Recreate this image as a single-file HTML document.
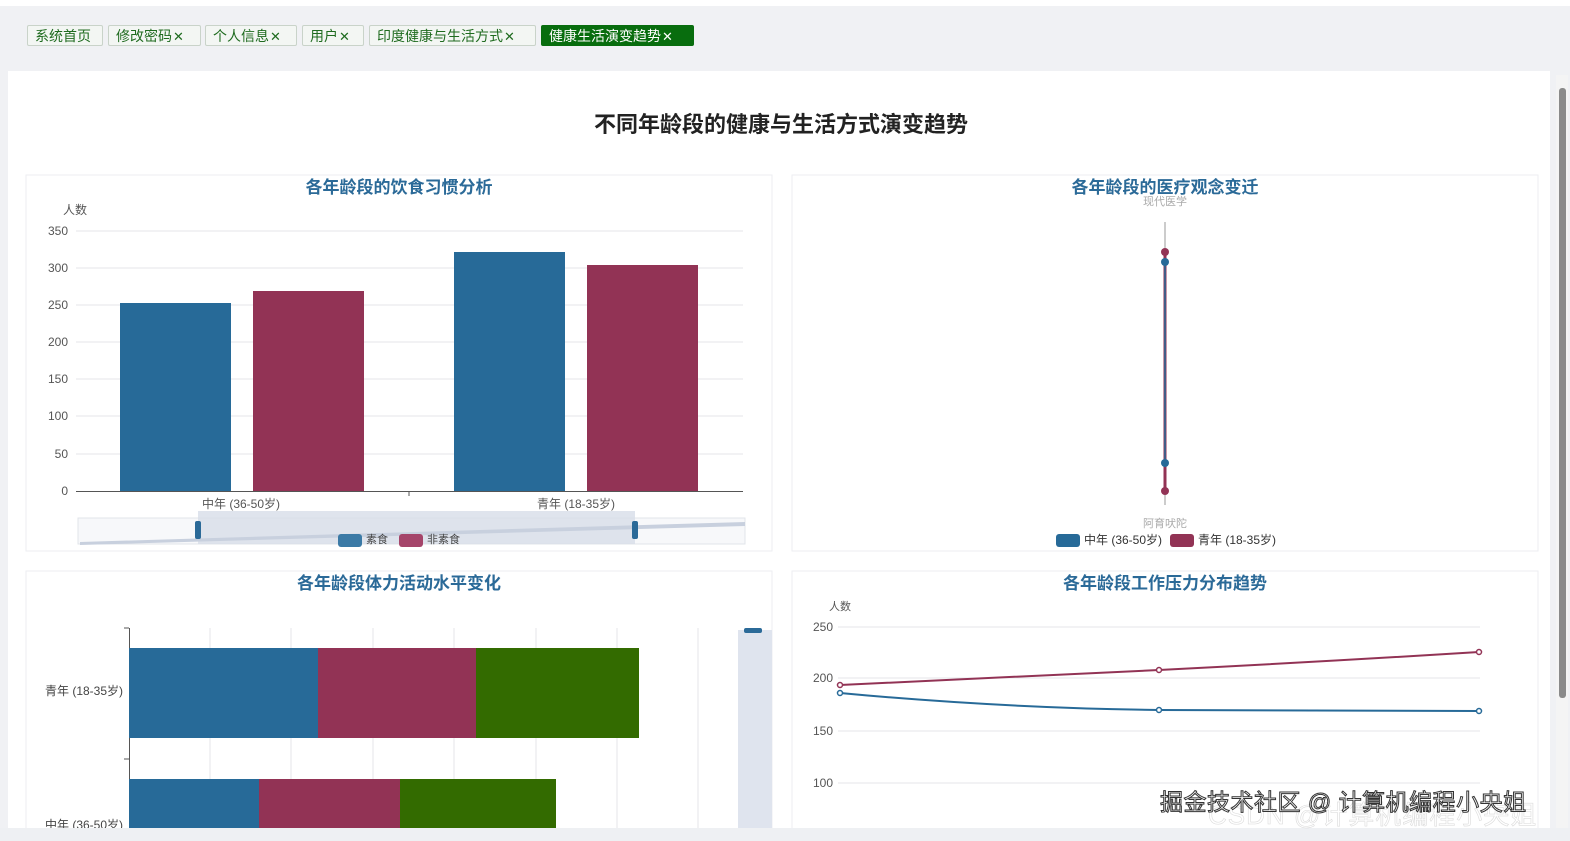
<!DOCTYPE html>
<html><head><meta charset="utf-8"><style>
body{margin:0;width:1570px;height:841px;background:#f0f1f4;font-family:"Liberation Sans","Noto Sans CJK SC",sans-serif;overflow:hidden;position:relative}
.tab{position:absolute;top:25px;height:21px;border:1px solid #c9d3c9;background:#f3f6f3;color:#1f6b1f;font-size:14px;line-height:21px;padding:0 7px;border-radius:2px;box-sizing:border-box;white-space:nowrap}
.tab i{font-style:normal;font-size:13px;font-weight:300;margin-left:1px}
.tab.on{background:#086d0e;color:#fff;border-color:#086d0e}
</style></head><body>
<div style="position:absolute;left:0;top:0;width:1570px;height:6px;background:#fff"></div>
<div class="tab" style="left:27px;width:76px">系统首页</div>
<div class="tab" style="left:108px;width:93px">修改密码<i>✕</i></div>
<div class="tab" style="left:205px;width:92px">个人信息<i>✕</i></div>
<div class="tab" style="left:302px;width:62px">用户<i>✕</i></div>
<div class="tab" style="left:369px;width:167px">印度健康与生活方式<i>✕</i></div>
<div class="tab on" style="left:541px;width:153px">健康生活演变趋势<i>✕</i></div>
<svg width="1570" height="841" style="position:absolute;left:0;top:0" font-family="Liberation Sans, Noto Sans CJK SC, sans-serif">
<rect x="8" y="71" width="1542" height="757" fill="#fff"/>
<rect x="1556" y="75" width="12" height="753" fill="#f4f4f4"/>
<rect x="1559" y="88" width="7" height="610" rx="3" fill="#8a8a8a"/>
<text x="781" y="132" font-size="22" font-weight="bold" text-anchor="middle" fill="#222">不同年龄段的健康与生活方式演变趋势</text>
<g fill="#fff" stroke="#eceef2"><rect x="26" y="175" width="746" height="376"/><rect x="792" y="175" width="746" height="376"/><rect x="26" y="571" width="746" height="270"/><rect x="792" y="571" width="746" height="270"/></g>
<g font-size="17" font-weight="bold" fill="#2b6a98" text-anchor="middle">
<text x="399" y="193">各年龄段的饮食习惯分析</text><text x="1165" y="193">各年龄段的医疗观念变迁</text>
<text x="399" y="589">各年龄段体力活动水平变化</text><text x="1165" y="589">各年龄段工作压力分布趋势</text></g>
<g font-size="12" fill="#555">
<text x="63" y="214">人数</text>
<g text-anchor="end"><text x="68" y="235">350</text><text x="68" y="272">300</text><text x="68" y="309">250</text><text x="68" y="346">200</text><text x="68" y="383">150</text><text x="68" y="420">100</text><text x="68" y="458">50</text><text x="68" y="495">0</text></g>
<text x="241" y="508" text-anchor="middle">中年 (36-50岁)</text><text x="576" y="508" text-anchor="middle">青年 (18-35岁)</text></g>
<g stroke="#e4e6ea"><line x1="76" y1="231" x2="743" y2="231"/><line x1="76" y1="268" x2="743" y2="268"/><line x1="76" y1="305" x2="743" y2="305"/><line x1="76" y1="342" x2="743" y2="342"/><line x1="76" y1="379" x2="743" y2="379"/><line x1="76" y1="416" x2="743" y2="416"/><line x1="76" y1="454" x2="743" y2="454"/></g>
<line x1="76" y1="491.5" x2="743" y2="491.5" stroke="#555"/>
<line x1="409" y1="491" x2="409" y2="496" stroke="#555"/>
<rect x="120" y="303" width="111" height="188" fill="#276a98"/><rect x="253" y="291" width="111" height="200" fill="#923355"/>
<rect x="454" y="252" width="111" height="239" fill="#276a98"/><rect x="587" y="265" width="111" height="226" fill="#923355"/>
<rect x="78" y="518" width="667" height="26" fill="#f7f8fa" stroke="#e1e4ea"/>
<rect x="198" y="511" width="437" height="33" fill="#d7dde8" opacity=".8"/>
<polygon points="80,542 745,522 745,526 80,545" fill="#c8d0de"/>
<rect x="195" y="521" width="6" height="18" rx="2" fill="#2b6a98"/><rect x="632" y="521" width="6" height="18" rx="2" fill="#2b6a98"/>
<rect x="338" y="534" width="24" height="13" rx="3" fill="#3b7aa6"/><text x="366" y="543" font-size="11" fill="#444">素食</text>
<rect x="399" y="534" width="24" height="13" rx="3" fill="#a5456a"/><text x="427" y="543" font-size="11" fill="#444">非素食</text>
<text x="1165" y="205" font-size="11" fill="#aaa" text-anchor="middle">现代医学</text>
<line x1="1165" y1="222" x2="1165" y2="505" stroke="#999"/>
<line x1="1165" y1="252" x2="1165" y2="491" stroke="#923355" stroke-width="3"/>
<line x1="1165" y1="262" x2="1165" y2="463" stroke="#276a98" stroke-width="1.5"/>
<circle cx="1165" cy="252" r="4" fill="#923355"/><circle cx="1165" cy="262" r="4" fill="#276a98"/>
<circle cx="1165" cy="463" r="4" fill="#276a98"/><circle cx="1165" cy="491" r="4" fill="#923355"/>
<text x="1165" y="527" font-size="11" fill="#aaa" text-anchor="middle">阿育吠陀</text>
<rect x="1056" y="534" width="24" height="13" rx="3" fill="#276a98"/><text x="1084" y="544" font-size="12" fill="#333">中年 (36-50岁)</text>
<rect x="1170" y="534" width="24" height="13" rx="3" fill="#923355"/><text x="1198" y="544" font-size="12" fill="#333">青年 (18-35岁)</text>
<g stroke="#e4e6ea"><line x1="210" y1="628" x2="210" y2="828"/><line x1="291" y1="628" x2="291" y2="828"/><line x1="373" y1="628" x2="373" y2="828"/><line x1="454" y1="628" x2="454" y2="828"/><line x1="536" y1="628" x2="536" y2="828"/><line x1="617" y1="628" x2="617" y2="828"/><line x1="698" y1="628" x2="698" y2="828"/></g>
<line x1="129.5" y1="628" x2="129.5" y2="828" stroke="#555"/>
<line x1="124" y1="628" x2="129" y2="628" stroke="#555"/><line x1="124" y1="759" x2="129" y2="759" stroke="#555"/>
<rect x="129" y="648" width="189" height="90" fill="#276a98"/><rect x="318" y="648" width="158" height="90" fill="#923355"/><rect x="476" y="648" width="163" height="90" fill="#336b00"/>
<rect x="129" y="779" width="130" height="60" fill="#276a98"/><rect x="259" y="779" width="141" height="60" fill="#923355"/><rect x="400" y="779" width="156" height="60" fill="#336b00"/>
<text x="84" y="695" font-size="12" fill="#444" text-anchor="middle">青年 (18-35岁)</text>
<text x="84" y="829" font-size="12" fill="#444" text-anchor="middle">中年 (36-50岁)</text>
<rect x="738" y="630" width="34" height="200" fill="#dfe4ee"/><rect x="744" y="628" width="18" height="5" rx="2" fill="#2b6a98"/>
<text x="829" y="610" font-size="11" fill="#555">人数</text>
<g font-size="12" fill="#555" text-anchor="end"><text x="833" y="631">250</text><text x="833" y="682">200</text><text x="833" y="735">150</text><text x="833" y="787">100</text></g>
<g stroke="#e4e6ea"><line x1="838" y1="627" x2="1480" y2="627"/><line x1="838" y1="678" x2="1480" y2="678"/><line x1="838" y1="731" x2="1480" y2="731"/><line x1="838" y1="783" x2="1480" y2="783"/></g>
<path d="M840 685 Q1000 678 1159 670 T1479 652" fill="none" stroke="#923355" stroke-width="2"/>
<path d="M840 693 Q1000 708 1159 710 L1479 711" fill="none" stroke="#276a98" stroke-width="2"/>
<g fill="#fff" stroke-width="1.5"><circle cx="840" cy="685" r="2.5" stroke="#923355"/><circle cx="1159" cy="670" r="2.5" stroke="#923355"/><circle cx="1479" cy="652" r="2.5" stroke="#923355"/>
<circle cx="840" cy="693" r="2.5" stroke="#276a98"/><circle cx="1159" cy="710" r="2.5" stroke="#276a98"/><circle cx="1479" cy="711" r="2.5" stroke="#276a98"/></g>
<rect x="0" y="828" width="1570" height="13" fill="#eef0f3"/>
<text x="1208" y="824" font-size="26" fill="#fff" opacity=".7" stroke="#ccc" stroke-width=".6" letter-spacing="1">CSDN @计算机编程小央姐</text>
<text x="1160" y="810" font-size="23" fill="#fff" stroke="#333" stroke-width="1" letter-spacing="0.5">掘金技术社区 @ 计算机编程小央姐</text>
</svg>
</body></html>
